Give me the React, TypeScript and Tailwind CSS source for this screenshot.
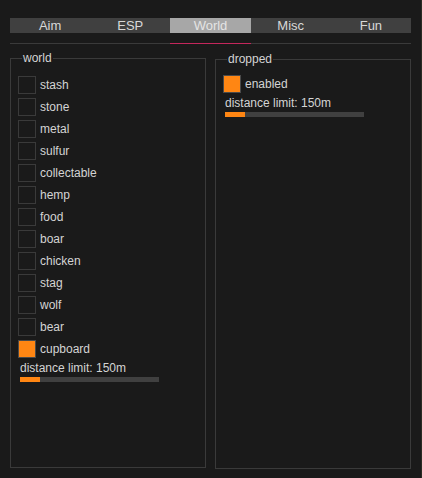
import React from "react";

const tabs = ["Aim", "ESP", "World", "Misc", "Fun"];
const worldItems: [string, boolean][] = [
  ["stash", false],
  ["stone", false],
  ["metal", false],
  ["sulfur", false],
  ["collectable", false],
  ["hemp", false],
  ["food", false],
  ["boar", false],
  ["chicken", false],
  ["stag", false],
  ["wolf", false],
  ["bear", false],
  ["cupboard", true],
];

function Check({ label, on }: { label: string; on: boolean }) {
  return (
    <div className="flex items-center gap-[4px] h-[18px]">
      <div
        className={
          "w-[18px] h-[18px] border " +
          (on ? "bg-[#ff8613] border-[#4a4a4a]" : "border-[#3a3a3a]")
        }
      />
      <span className="text-[12px] leading-[14px] text-[#d4d4d4]">{label}</span>
    </div>
  );
}

function Slider() {
  return (
    <div className="flex flex-col pl-[2px] mt-[3px]">
      <span className="text-[12px] leading-[14px] text-[#d4d4d4]">distance limit: 150m</span>
      <div className="mt-[2px] w-[139px] h-[5px] bg-[#404040] flex">
        <div className="w-[20px] h-full bg-[#ff8613]" />
      </div>
    </div>
  );
}

function Group({ title, children, extra }: { title: string; children: React.ReactNode; extra?: string }) {
  return (
    <fieldset
      className={
        "border border-[#3a3a3a] h-[417px] pl-[7px] pr-[7px] min-w-0 " + (extra ?? "")
      }
    >
      <legend className="ml-[4px] px-[1px] text-[12px] leading-[14px] text-[#d4d4d4]">{title}</legend>
      {children}
    </fieldset>
  );
}

export default function App() {
  return (
    <div
      className="w-[422px] h-[478px] bg-[#1a1a1a] border-r border-[#2c2c24] flex flex-col"
      style={{ fontFamily: '"Liberation Sans", Arial, sans-serif' }}
    >
      <div className="mt-[18px] mx-[10px] h-[15px] grid grid-cols-5 bg-[#404040]">
        {tabs.map((t) => (
          <div
            key={t}
            className={
              "flex items-center justify-center text-[13px] leading-[15px] " +
              (t === "World" ? "bg-[#a7a7a7] text-[#e4e4e4]" : "text-[#d8d8d8]")
            }
          >
            {t}
          </div>
        ))}
      </div>
      <div className="mt-[10px] mx-[10px] grid grid-cols-5">
        {tabs.map((t) => (
          <div
            key={t}
            className={"h-px " + (t === "World" ? "bg-[#c4275c]" : "bg-[#3a3a3a]")}
          />
        ))}
      </div>
      <div className="mt-[7px] mx-[10px] grid grid-cols-[196px_196px] gap-[9px]">
        <Group title="world" extra="pt-[11px]">
          <div className="flex flex-col gap-[4px]">
            {worldItems.map(([l, on]) => (
              <Check key={l} label={l} on={on} />
            ))}
          </div>
          <Slider />
        </Group>
        <Group title="dropped" extra="mt-px pt-[9px]">
          <div className="flex flex-col gap-[4px]">
            <Check label="enabled" on={true} />
          </div>
          <Slider />
        </Group>
      </div>
    </div>
  );
}
